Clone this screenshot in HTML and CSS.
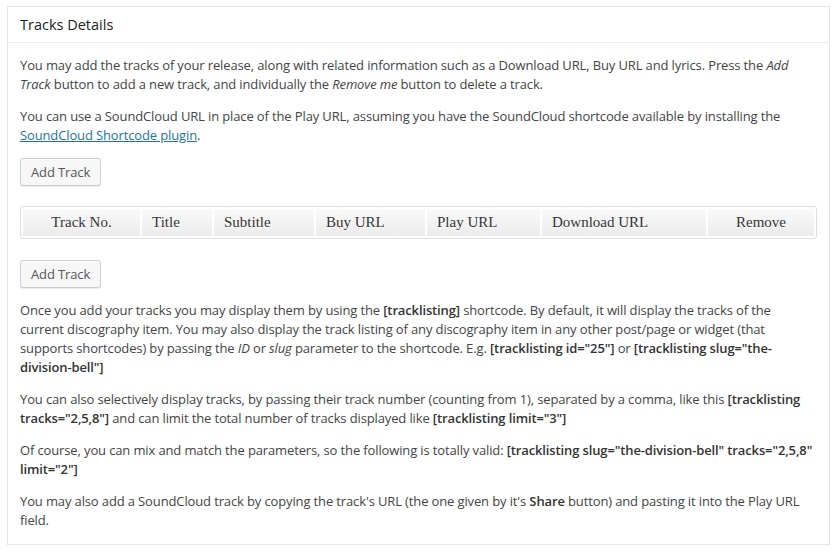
FILE: index.html
```html
<!DOCTYPE html>
<html lang="en">
<head>
<meta charset="UTF-8" />
<meta name="viewport" content="width=device-width, initial-scale=1" />
<title>Tracks Details</title>
<link rel="stylesheet" href="styles.css">
</head>
<body>
<div class="postbox">
  <h2 class="hndle">Tracks Details</h2>
  <div class="inside">
    <p>You may add the tracks of your release, along with related information such as a Download URL, Buy URL and lyrics. Press the <em>Add Track</em> button to add a new track, and individually the <em>Remove me</em> button to delete a track.</p>
    <p>You can use a SoundCloud URL in place of the Play URL, assuming you have the SoundCloud shortcode available by installing the <a href="#">SoundCloud Shortcode plugin</a>.</p>

    <p class="actions"><button type="button" class="button">Add Track</button></p>

    <table class="tracks">
      <thead>
        <tr>
          <th class="col-no center">Track No.</th>
          <th class="col-title">Title</th>
          <th class="col-subtitle">Subtitle</th>
          <th class="col-buy">Buy URL</th>
          <th class="col-play">Play URL</th>
          <th class="col-download">Download URL</th>
          <th class="col-remove center">Remove</th>
        </tr>
      </thead>
      <tbody></tbody>
    </table>

    <p class="actions"><button type="button" class="button">Add Track</button></p>

    <p>Once you add your tracks you may display them by using the <b>[tracklisting]</b> shortcode. By default, it will display the tracks of the current discography item. You may also display the track listing of any discography item in any other post/page or widget (that supports shortcodes) by passing the <em>ID</em> or <em>slug</em> parameter to the shortcode. E.g. <b>[tracklisting id="25"]</b> or <b>[tracklisting slug="the-division-bell"]</b></p>
    <p>You can also selectively display tracks, by passing their track number (counting from 1), separated by a comma, like this <b>[tracklisting tracks="2,5,8"]</b> and can limit the total number of tracks displayed like <b>[tracklisting limit="3"]</b></p>
    <p>Of course, you can mix and match the parameters, so the following is totally valid: <b>[tracklisting slug="the-division-bell" tracks="2,5,8" limit="2"]</b></p>
    <p>You may also add a SoundCloud track by copying the track's URL (the one given by it's <b>Share</b> button) and pasting it into the Play URL field.</p>
  </div>
</div>
</body>
</html>
```

FILE: styles.css
```css
body {
  margin: 6px 9px 0 7px;
  background: #fff;
  font-family: "Open Sans", sans-serif;
  font-size: 13px;
  line-height: 19px;
  letter-spacing: -0.13px;
  color: #444;
}
.postbox {
  border: 1px solid #e5e5e5;
  background: #fff;
  box-shadow: 0 1px 1px rgba(0,0,0,0.04);
}
.hndle {
  margin: 0;
  padding: 8px 12px 7px;
  font-size: 14.5px;
  font-weight: 400;
  line-height: 20px;
  letter-spacing: 0;
  color: #222;
  border-bottom: 1px solid #eee;
}
.inside {
  padding: 0 12px 1px;
}
.inside p {
  margin: 13px 0;
}
.inside b {
  font-weight: 600;
  color: #333;
}
a {
  color: #21759b;
}
.button {
  height: 28px;
  padding: 0 10px 1px;
  font-family: "Open Sans", sans-serif;
  font-size: 13px;
  line-height: 26px;
  letter-spacing: -0.13px;
  color: #555;
  background: #f7f7f7;
  border: 1px solid #ccc;
  border-radius: 3px;
  box-shadow: inset 0 1px 0 #fff, 0 1px 0 rgba(0,0,0,0.08);
  cursor: pointer;
  vertical-align: top;
}
.tracks {
  width: 100%;
  border: 1px solid #dfdfdf;
  border-radius: 3px;
  border-spacing: 2px;
  background: #fff;
  margin: 20px 0 21px;
}
.tracks th {
  height: 27px;
  padding: 0 10px;
  font-family: "Liberation Serif", serif;
  font-size: 15px;
  font-weight: 400;
  letter-spacing: 0;
  color: #333;
  text-align: left;
  background: linear-gradient(to bottom, #f9f9f9, #ececec);
  text-shadow: 0 1px 0 #fff;
}
.tracks th.center {
  text-align: center;
}
.col-no { width: 97px; }
.col-title { width: 50px; }
.col-subtitle { width: 80px; }
.col-buy { width: 89px; }
.col-play { width: 93px; }
.col-download { width: 144px; }
```
